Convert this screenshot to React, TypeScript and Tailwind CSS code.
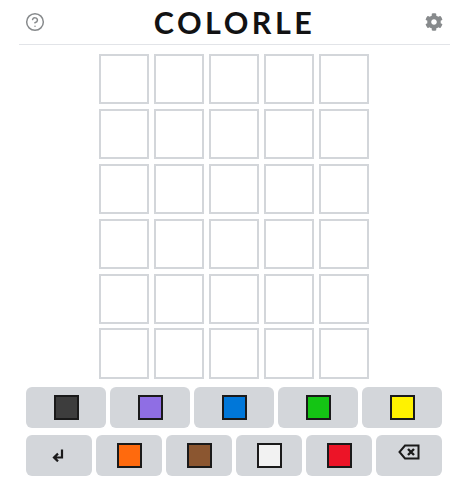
import React from 'react';
import { CircleHelp } from 'lucide-react';
import { FaCog } from 'react-icons/fa';

const topKeys = ['#3d3d3d', '#8f6ee4', '#0077d9', '#14c514', '#fff200'];
const bottomKeys = ['#ff6a0d', '#8b5630', '#f2f2f2', '#ec1427'];

const Swatch = ({ color }: { color: string }) => (
  <span className="block w-[25px] h-[25px] border-2 border-[#1a1a1a]" style={{ backgroundColor: color }} />
);

const keyClass = 'h-[41px] flex items-center justify-center rounded-md bg-[#d3d6da]';

const App = () => {
  const rows = Array.from({ length: 6 });
  const cols = Array.from({ length: 5 });

  return (
    <div className="w-[468px] h-[494px] bg-white flex flex-col items-center font-['Lato','Open_Sans',sans-serif]">
      <header className="w-[431px] h-[45px] shrink-0 flex items-center justify-between px-[6px] border-b border-[#e2e4e8]">
        <CircleHelp className="w-[20px] h-[20px] mb-px text-[#878a8c]" strokeWidth={1.8} />
        <h1 className="text-[30.5px] leading-none font-bold tracking-[3.5px] text-[#121213]">COLORLE</h1>
        <FaCog className="w-[18px] h-[18px] mr-px text-[#878a8c]" />
      </header>

      <div className="mt-[9px] flex flex-col gap-[4.7px]">
        {rows.map((_, r) => (
          <div key={r} className="flex gap-[4.5px]">
            {cols.map((_, c) => (
              <div key={c} className="w-[50.4px] h-[50.2px] border-2 border-[#d3d6da]" />
            ))}
          </div>
        ))}
      </div>

      <div className="w-[416px] mt-[8px] flex flex-col gap-[7px]">
        <div className="flex gap-[4px]">
          {topKeys.map((color) => (
            <button key={color} className={`${keyClass} flex-1`}>
              <Swatch color={color} />
            </button>
          ))}
        </div>
        <div className="flex gap-[4px]">
          <button className={`${keyClass} flex-1`}>
            <svg className="mr-[2px]" width="12" height="13" viewBox="0 0 12 13" fill="none" stroke="#1a1a1a" strokeWidth="2.2">
              <path d="M10 0.5v8H3M6 4.6L2 8.5l4 3.9" />
            </svg>
          </button>
          {bottomKeys.map((color) => (
            <button key={color} className={`${keyClass} flex-1`}>
              <Swatch color={color} />
            </button>
          ))}
          <button className={`${keyClass} flex-1`}>
            <svg className="mb-[6px]" width="22" height="16" viewBox="0 0 22 16" fill="none" stroke="#1a1a1a" strokeWidth="2">
              <path d="M7 1.5h13.5v13H7L1.5 8z" />
              <path d="M10 5l6 6M16 5l-6 6" strokeWidth="2.4" />
            </svg>
          </button>
        </div>
      </div>
    </div>
  );
};

export default App;
